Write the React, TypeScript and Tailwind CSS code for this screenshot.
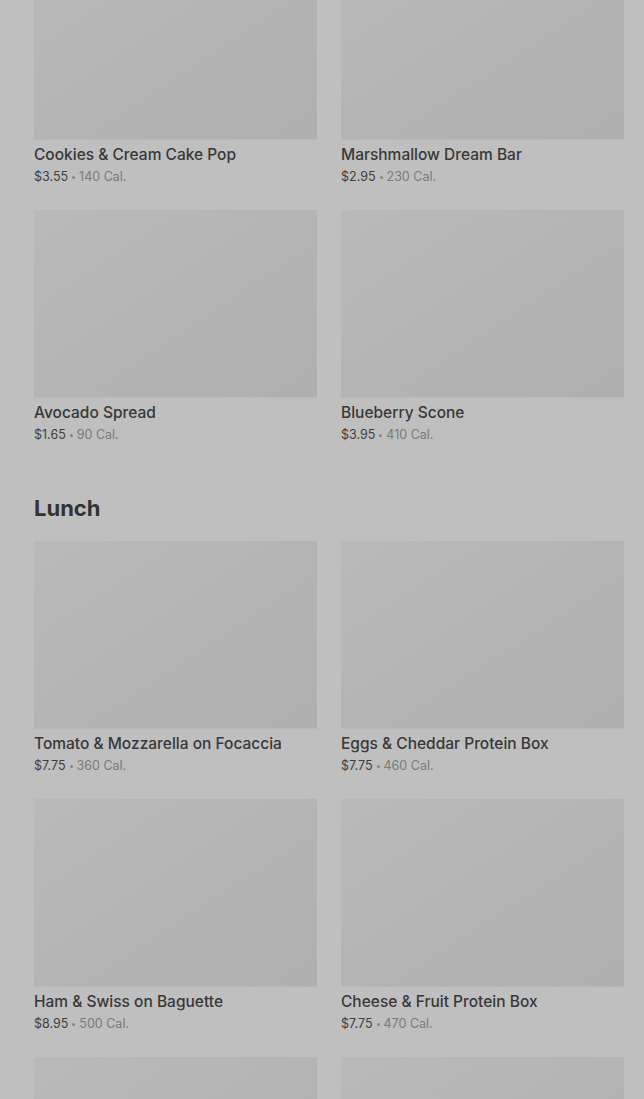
import React from 'react';

interface Item {
  name: string;
  price: string;
  cal: number;
}

const bakery: Item[] = [
  { name: 'Cookies & Cream Cake Pop', price: '$3.55', cal: 140 },
  { name: 'Marshmallow Dream Bar', price: '$2.95', cal: 230 },
  { name: 'Avocado Spread', price: '$1.65', cal: 90 },
  { name: 'Blueberry Scone', price: '$3.95', cal: 410 },
];

const lunch: Item[] = [
  { name: 'Tomato & Mozzarella on Focaccia', price: '$7.75', cal: 360 },
  { name: 'Eggs & Cheddar Protein Box', price: '$7.75', cal: 460 },
  { name: 'Ham & Swiss on Baguette', price: '$8.95', cal: 500 },
  { name: 'Cheese & Fruit Protein Box', price: '$7.75', cal: 470 },
  { name: 'Turkey & Pesto Panini', price: '$8.45', cal: 520 },
  { name: 'Chicken & Hummus Protein Box', price: '$7.95', cal: 420 },
];

function ItemCard({ item }: { item: Item }) {
  return (
    <div className="flex flex-col">
      <div className="h-[188px] w-full bg-gradient-to-br from-[#b9b9b9] via-[#b4b4b4] to-[#afafaf] border-b border-[#b8b8b8]" />
      <div className="mt-[5px] text-[15.5px] leading-[20px] font-medium text-[#383838] truncate">
        {item.name}
      </div>
      <div className="mt-[3px] flex items-center text-[12.5px] leading-[18px] text-[#3e3e3e]">
        <span>{item.price}</span>
        <span className="mx-[4px] w-[3px] h-[3px] rounded-full bg-[#858585]" />
        <span className="text-[#7a7a7a]">{item.cal} Cal.</span>
      </div>
    </div>
  );
}

export default function App() {
  return (
    <div className="w-full h-[1099px] overflow-hidden bg-[#bfbfbf] font-['Inter',_'Roboto',_sans-serif]">
      <div className="pl-[34px] pr-[20px] -mt-[48px]">
        <div className="grid grid-cols-2 gap-x-[24px] gap-y-[24px]">
          {bakery.map((item) => (
            <ItemCard key={item.name} item={item} />
          ))}
        </div>
        <h2 className="mt-[50px] text-[22px] leading-[28px] font-bold text-[#333333]">Lunch</h2>
        <div className="mt-[19px] grid grid-cols-2 gap-x-[24px] gap-y-[24px]">
          {lunch.map((item) => (
            <ItemCard key={item.name} item={item} />
          ))}
        </div>
      </div>
    </div>
  );
}
